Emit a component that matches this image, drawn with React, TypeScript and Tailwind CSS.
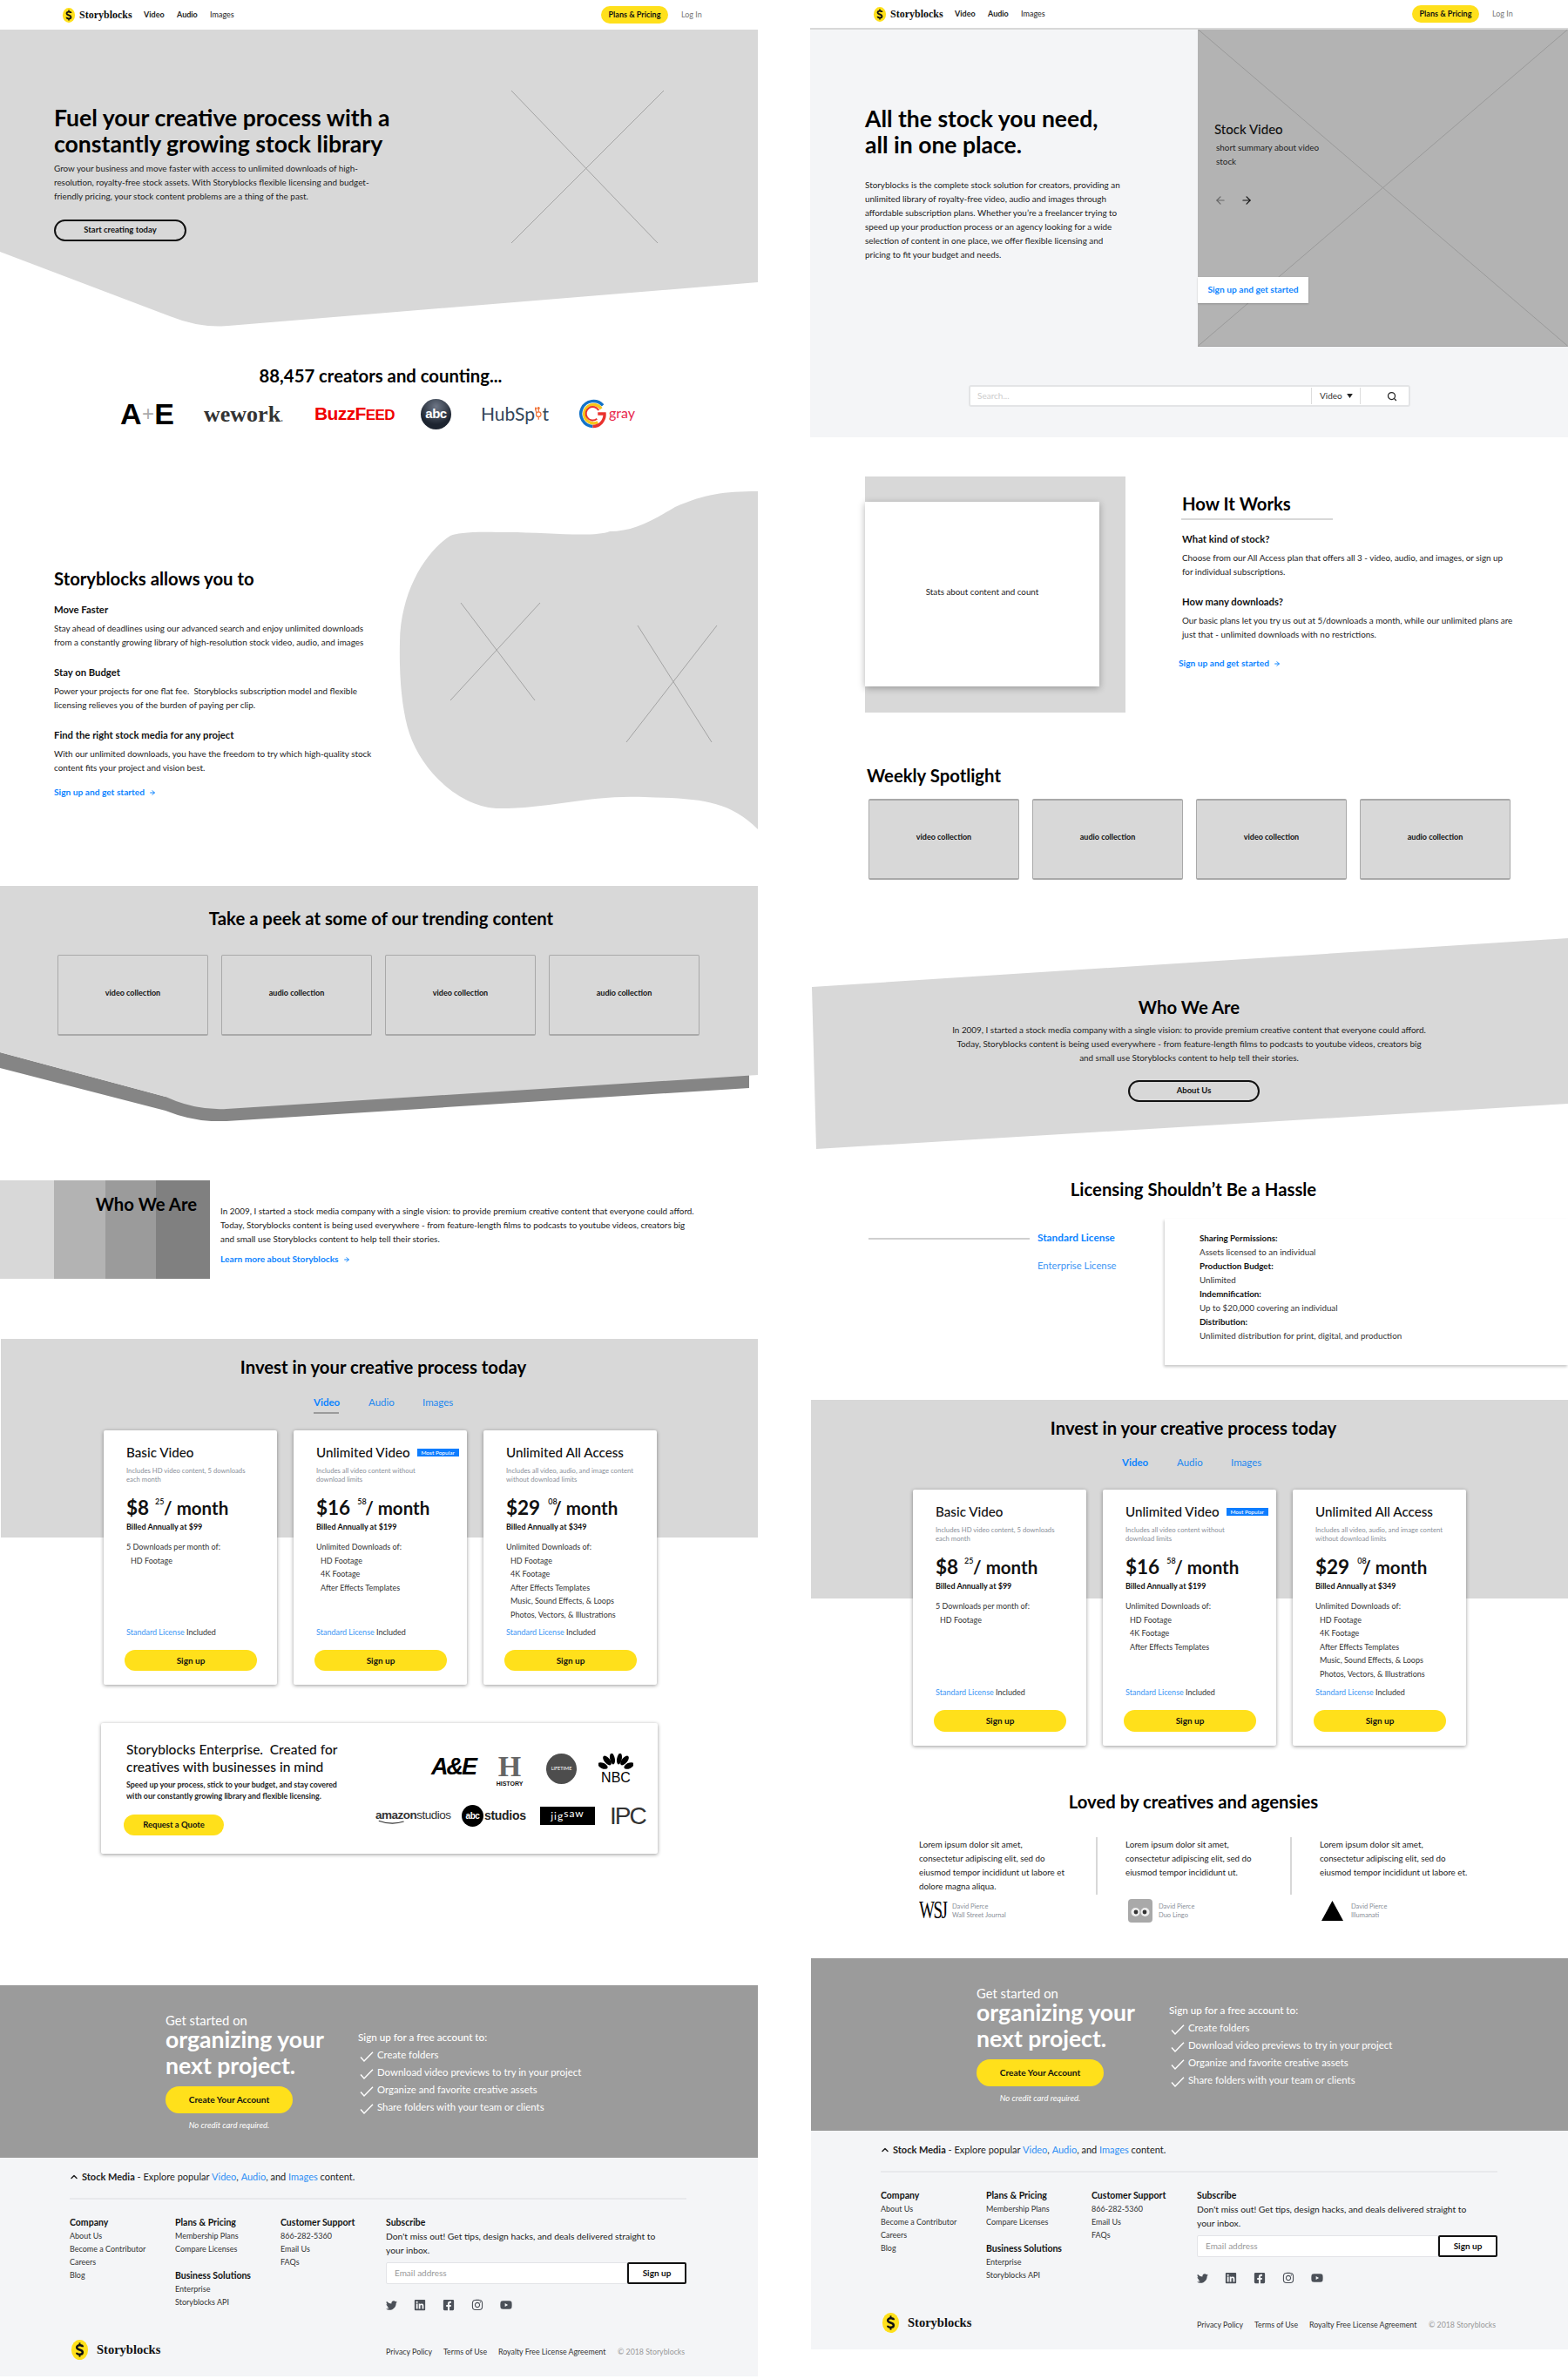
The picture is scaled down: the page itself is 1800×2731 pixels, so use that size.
import React from "react";
import { ArrowLeft, ArrowRight, ChevronUp, Search } from "lucide-react";
import { FaTwitter, FaLinkedin, FaFacebookSquare, FaInstagram, FaYoutube } from "react-icons/fa";

function SbLogo({ size }: { size: "sm" | "lg" }) {
  return (
    <svg viewBox="0 0 20 24" className={size === "sm" ? "w-[16px] h-[17px] shrink-0" : "w-[23px] h-[23px] shrink-0"}>
      <ellipse cx="10" cy="12" rx="10" ry="12" fill="#ffe01b" />
      <path d="M13.5 8.5C13.5 7 12 6.5 10 6.5S6.5 7.5 6.5 9.2c0 3.6 7 2 7 5.6 0 1.7-1.5 2.7-3.5 2.7s-3.5-.7-3.5-2.2" fill="none" stroke="#111" strokeWidth="2.6" />
      <rect x="9" y="3.5" width="2" height="3" fill="#111" />
      <rect x="9" y="17.5" width="2" height="3" fill="#111" />
    </svg>
  );
}

function Header({ right }: { right?: boolean }) {
  return (
    <div className={right ? "h-[34px] flex items-center bg-white border-b-2 border-[#d8d8d8] pl-[72px]" : "h-[34px] flex items-center bg-white pl-[71px]"}>
      <SbLogo size="sm" />
      <span className="ml-[4px] w-[74px] font-['Liberation_Serif',serif] font-bold text-[12px] text-[#111]">Storyblocks</span>
      <span className="w-[38px] text-[9px] font-bold text-[#222]">Video</span>
      <span className="w-[38px] text-[9px] font-bold text-[#222]">Audio</span>
      <span className="w-[449px] text-[9px] font-medium text-[#333]">Images</span>
      <span className="w-[77px] h-[20px] rounded-full bg-[#ffe01b] flex items-center justify-center text-[9px] font-bold text-[#111]">Plans &amp; Pricing</span>
      <span className="ml-[15px] text-[9px] text-[#777]">Log In</span>
    </div>
  );
}

function Cross({ children }: { children: React.ReactNode }) {
  return <svg className="absolute inset-0 w-full h-full" fill="none" stroke="#a3a3a3" strokeWidth="1">{children}</svg>;
}

function BlueLink({ children, arrow }: { children: React.ReactNode; arrow?: boolean }) {
  return (
    <div className="flex items-center h-[16px] text-[10.2px] font-bold text-[#0d84ff]">
      {children}
      {arrow && <ArrowRight size={8} strokeWidth={3} className="ml-[5px]" />}
    </div>
  );
}

function Para({ children, className }: { children: React.ReactNode; className?: string }) {
  return <p className={"text-[9.9px] leading-[16px] text-[#222] whitespace-nowrap " + (className ?? "")}>{children}</p>;
}

function H2({ children, className }: { children: React.ReactNode; className?: string }) {
  return <h2 className={"text-[20.3px] leading-[26px] font-bold text-black " + (className ?? "")}>{children}</h2>;
}

function Collection({ label, filled }: { label: string; filled?: boolean }) {
  return (
    <div className={filled
      ? "w-[173px] h-[93px] flex items-center justify-center pb-[5px] rounded-[2px] bg-[#d8d8d8] border border-[#a9a9a9] border-b-2 border-t-2 text-[9px] font-bold text-[#111]"
      : "w-[173px] h-[93px] flex items-center justify-center pb-[5px] rounded-[2px] border border-[#a9a9a9] border-b-2 text-[9px] font-bold text-[#111]"}>
      {label}
    </div>
  );
}

function OutlineBtn({ children, className }: { children: React.ReactNode; className?: string }) {
  return <div className={"h-[25px] rounded-full border-2 border-[#111] flex items-center justify-center text-[9.5px] font-bold text-[#111] " + (className ?? "")}>{children}</div>;
}

function YellowBtn({ children, className }: { children: React.ReactNode; className?: string }) {
  return <div className={"rounded-full bg-[#ffe01b] flex items-center justify-center font-bold text-[#111] " + (className ?? "")}>{children}</div>;
}

type Plan = { name: string; badge?: boolean; desc: string[]; dollars: string; cents: string; supClass: string; billed: string; lead: string; items: string[] };

const plans: Plan[] = [
  { name: "Basic Video", desc: ["Includes HD video content, 5 downloads", "each month"], dollars: "$8", cents: "25", supClass: "ml-[7px] w-[10px]", billed: "Billed Annually at $99", lead: "5 Downloads per month of:", items: ["HD Footage"] },
  { name: "Unlimited Video", badge: true, desc: ["Includes all video content without", "download limits"], dollars: "$16", cents: "58", supClass: "ml-[8px] w-[9px]", billed: "Billed Annually at $199", lead: "Unlimited Downloads of:", items: ["HD Footage", "4K Footage", "After Effects Templates"] },
  { name: "Unlimited All Access", desc: ["Includes all video, audio, and image content", "without download limits"], dollars: "$29", cents: "08", supClass: "ml-[9px] w-[6px]", billed: "Billed Annually at $349", lead: "Unlimited Downloads of:", items: ["HD Footage", "4K Footage", "After Effects Templates", "Music, Sound Effects, & Loops", "Photos, Vectors, & Illustrations"] },
];

function PlanCard({ plan, tall }: { plan: Plan; tall?: boolean }) {
  return (
    <div className={(tall ? "h-[294px]" : "h-[292px]") + " w-[199px] flex flex-col bg-white rounded-[2px] shadow-[0_1px_4px_rgba(0,0,0,0.4)] pl-[26px]"}>
      <div className="mt-[15px] h-[20px] flex items-center text-[15.2px] font-medium text-[#111] whitespace-nowrap">
        {plan.name}
        {plan.badge && <span className="ml-[8px] w-[48px] h-[9px] bg-[#0d7dff] text-white text-[6.5px] leading-[9px] text-center">Most Popular</span>}
      </div>
      <div className="mt-[6px] text-[7.7px] leading-[10px] text-[#8a8f99] whitespace-nowrap">
        <div>{plan.desc[0]}</div>
        <div>{plan.desc[1]}</div>
      </div>
      <div className="mt-[14px] h-[28px] flex items-center text-[22.5px] font-bold text-[#111] whitespace-nowrap">
        {plan.dollars}
        <span className={"text-[9px] font-semibold self-start leading-[14px] " + plan.supClass}>{plan.cents}</span>
        <span className="text-[20.5px]">/ month</span>
      </div>
      <div className="mt-[1px] text-[9px] leading-[14px] font-bold text-[#111]">{plan.billed}</div>
      <div className="mt-[8px] text-[9px] leading-[15.5px] text-[#333]">
        <div>{plan.lead}</div>
        {plan.items.map((it) => <div key={it} className="pl-[5px]">{it}</div>)}
      </div>
      <div className="mt-auto text-[9px] leading-[14px] text-[#333]"><span className="text-[#3d96f5]">Standard License</span> Included</div>
      <YellowBtn className={(tall ? "h-[25px] mb-[16px]" : "h-[24px] mb-[16px]") + " mt-[13px] -ml-[2px] w-[152px] text-[10px]"}>Sign up</YellowBtn>
    </div>
  );
}

function Pricing({ right }: { right?: boolean }) {
  return (
    <section className="relative">
      <div className="absolute left-px right-0 top-0 h-[228px] bg-[#d8d8d8]" />
      <div className="relative">
        <H2 className="pt-[19px] pl-[10px] text-center">Invest in your creative process today</H2>
        <div className={right ? "mt-[19px] pl-[358px] flex text-[11.5px] leading-[16px] text-[#1e88f0] h-[16px]" : "mt-[20px] pl-[360px] flex text-[11.5px] leading-[16px] text-[#1e88f0] h-[16px]"}>
          <span className="w-[63px] font-bold relative text-[#0d84ff]">
            Video
            {!right && <span className="absolute left-0 top-[19px] w-[29px] h-[2px] bg-[#9b9b9b]" />}
          </span>
          <span className="w-[62px]">Audio</span>
          <span>Images</span>
        </div>
        <div className={right ? "mt-[23px] pl-[118px] flex gap-[19px]" : "mt-[24px] pl-[119px] flex gap-[19px]"}>
          {plans.map((p) => <PlanCard key={p.name} plan={p} tall={right} />)}
        </div>
      </div>
    </section>
  );
}

function CheckItem({ children }: { children: React.ReactNode }) {
  return (
    <div className="h-[20px] flex items-center pl-[2px] text-[11.4px] text-white">
      <svg viewBox="0 0 16 12" className="w-[16px] h-[12px] mt-[3px] mr-[4px]" fill="none" stroke="#fff" strokeWidth="1.4"><path d="M1 6.5L5 11L15 .8" /></svg>
      {children}
    </div>
  );
}

function CTA() {
  return (
    <section className="h-[198px] bg-[#9b9b9b] flex pl-[190px] text-white">
      <div className="w-[221px]">
        <div className="pt-[30px] text-[14.8px] leading-[20px]">Get started on</div>
        <div className="-mt-[3px] text-[26.6px] leading-[30px] font-bold whitespace-nowrap">organizing your<br />next project.</div>
        <YellowBtn className="mt-[9px] w-[146px] h-[31px] text-[10.2px]">Create Your Account</YellowBtn>
        <div className="mt-[7px] w-[146px] text-center text-[9.5px] leading-[14px] italic">No credit card required.</div>
      </div>
      <div className="pt-[50px]">
        <div className="h-[20px] flex items-center text-[11.7px] font-medium">Sign up for a free account to:</div>
        <CheckItem>Create folders</CheckItem>
        <CheckItem>Download video previews to try in your project</CheckItem>
        <CheckItem>Organize and favorite creative assets</CheckItem>
        <CheckItem>Share folders with your team or clients</CheckItem>
      </div>
    </section>
  );
}

function FootCol({ title, items, className }: { title: string; items: string[]; className?: string }) {
  return (
    <div className={className}>
      <div className="text-[10.5px] leading-[16px] font-bold text-[#111] whitespace-nowrap">{title}</div>
      {items.map((i) => <div key={i} className="text-[9px] leading-[15px] text-[#333] whitespace-nowrap">{i}</div>)}
    </div>
  );
}

function Footer() {
  return (
    <footer className="h-[251px] bg-[#f4f5f7] pl-[80px]">
      <div className="pt-[14px] h-[30px] flex items-center text-[11px] leading-[16px] text-[#222] whitespace-pre">
        <ChevronUp size={12} strokeWidth={3} className="mr-[3px] -ml-[1px]" />
        <span className="font-bold">Stock Media</span> - Explore popular <span className="text-[#2f8ff5]">Video</span>, <span className="text-[#2f8ff5]">Audio</span>, and <span className="text-[#2f8ff5]">Images</span> content.
      </div>
      <div className="mt-[16px] w-[708px] h-[2px] bg-[#e8e9ec]" />
      <div className="mt-[18px] flex">
        <FootCol className="w-[121px]" title="Company" items={["About Us", "Become a Contributor", "Careers", "Blog"]} />
        <div className="w-[121px]">
          <FootCol title="Plans & Pricing" items={["Membership Plans", "Compare Licenses"]} />
          <FootCol className="mt-[15px]" title="Business Solutions" items={["Enterprise", "Storyblocks API"]} />
        </div>
        <FootCol className="w-[121px]" title="Customer Support" items={["866-282-5360", "Email Us", "FAQs"]} />
        <div className="w-[345px]">
          <div className="text-[10.5px] leading-[16px] font-bold text-[#111]">Subscribe</div>
          <div className="text-[10.3px] leading-[16px] text-[#222] whitespace-nowrap">Don't miss out! Get tips, design hacks, and deals delivered straight to<br />your inbox.</div>
          <div className="mt-[6px] flex">
            <div className="w-[277px] h-[25px] bg-white border border-[#e3e4e8] rounded-l-[2px] pl-[9px] flex items-center text-[10px] text-[#999]">Email address</div>
            <div className="w-[68px] h-[25px] border-2 border-[#111] rounded-[2px] bg-white flex items-center justify-center text-[10px] font-bold text-[#111]">Sign up</div>
          </div>
          <div className="mt-[17px] flex items-center gap-[19px] text-[#4b5058]">
            <FaTwitter size={13} /><FaLinkedin size={14} /><FaFacebookSquare size={14} /><FaInstagram size={14} /><FaYoutube size={14} />
          </div>
        </div>
      </div>
      <div className="mt-[33px] flex items-center h-[23px]">
        <div className="w-[363px] flex items-center">
          <SbLogo size="lg" />
          <span className="ml-[8px] font-['Liberation_Serif',serif] font-bold text-[14.5px] text-[#111]">Storyblocks</span>
        </div>
        <div className="pt-[4px] flex text-[8.8px] text-[#333] whitespace-nowrap">
          <span className="w-[66px]">Privacy Policy</span>
          <span className="w-[63px]">Terms of Use</span>
          <span className="w-[137px]">Royalty Free License Agreement</span>
          <span className="text-[#999]">© 2018 Storyblocks</span>
        </div>
      </div>
    </footer>
  );
}

function LeftPage() {
  const sections = [
    { h: "Move Faster", p: <>Stay ahead of deadlines using our advanced search and enjoy unlimited downloads<br />from a constantly growing library of high-resolution stock video, audio, and images</> },
    { h: "Stay on Budget", p: <>Power your projects for one flat fee.&nbsp; Storyblocks subscription model and flexible<br />licensing relieves you of the burden of paying per clip.</> },
    { h: "Find the right stock media for any project", p: <>With our unlimited downloads, you have the freedom to try which high-quality stock<br />content fits your project and vision best.</> },
  ];
  return (
    <div className="w-[870px] shrink-0">
      <Header />
      {/* Hero */}
      <section className="relative h-[341px]">
        <svg className="absolute inset-0 w-full h-full" viewBox="0 0 870 341" fill="#d8d8d8"><path d="M0 0H870V290L262 340Q230 343 195 329L0 255Z" /></svg>
        <Cross><path d="M587 70L755 245M762 70L587 245" /></Cross>
        <div className="relative pl-[62px] pt-[86px]">
          <h1 className="text-[26.6px] leading-[30px] font-bold text-black whitespace-nowrap">Fuel your creative process with a<br />constantly growing stock library</h1>
          <Para className="mt-[5px]">Grow your business and move faster with access to unlimited downloads of high-<br />resolution, royalty-free stock assets. With Storyblocks flexible licensing and budget-<br />friendly pricing, your stock content problems are a thing of the past.</Para>
          <OutlineBtn className="mt-[19px] w-[152px]">Start creating today</OutlineBtn>
        </div>
      </section>
      {/* Creators */}
      <H2 className="mt-[43px] pl-[4px] text-center">88,457 creators and counting...</H2>
      <div className="mt-[14px] h-[34px] pl-[138px] flex items-center gap-[34px]">
        <div className="w-[62px] flex items-center justify-between text-[34px] leading-[32px] font-['Liberation_Sans',sans-serif] font-bold text-black"><span>A</span><span className="font-normal text-[#aaa] text-[24px]">+</span><span>E</span></div>
        <div className="w-[93px] font-['Liberation_Serif',serif] font-bold text-[26px] text-[#333] whitespace-nowrap">wework<span className="text-[#888] text-[12px]">.</span></div>
        <div className="w-[88px] font-['Liberation_Sans',sans-serif] font-bold text-[21px] tracking-[-0.6px] text-[#f00000] whitespace-nowrap">BuzzF<span className="uppercase text-[17px]">eed</span></div>
        <div className="w-[35px] h-[35px] rounded-full bg-[radial-gradient(circle_at_50%_25%,#6d7686,#1d2430_65%)] flex items-center justify-center font-['Liberation_Sans',sans-serif] font-bold text-[15px] tracking-[-0.5px] text-white">abc</div>
        <div className="w-[78px] flex items-center text-[21px] text-[#33475b] whitespace-nowrap">
          HubSp
          <svg viewBox="0 0 14 26" className="w-[13px] h-[25px] -mt-[2px]" fill="none" stroke="#f0743a" strokeWidth="2"><circle cx="7" cy="15" r="4.5" /><path d="M7 10V3M3 12L1 5M7 20V25" /><circle cx="7" cy="3" r="1.5" fill="#f0743a" /><circle cx="1.5" cy="4" r="1.4" fill="#f0743a" /></svg>
          t
        </div>
        <div className="w-[66px] flex items-center -ml-px">
          <svg viewBox="0 0 34 36" className="w-[34px] h-[36px]" fill="none" strokeWidth="3.5">
            <path d="M30 8A15 15 0 1 0 18 33" stroke="#1473c8" />
            <path d="M28 12A11 11 0 1 0 24 28" stroke="#f7c51a" />
            <path d="M24 18H32A14 14 0 0 1 18 33" stroke="#e9322e" />
            <path d="M25 14A8 8 0 1 0 23 24" stroke="#e9322e" strokeWidth="2" />
          </svg>
          <span className="ml-[3px] -mt-[2px] text-[16px] text-[#e8274b]">gray</span>
        </div>
      </div>
      {/* Allows */}
      <section className="relative h-[525px]">
        <svg className="absolute left-0 top-0 w-full h-full" viewBox="0 0 870 525" fill="#d8d8d8">
          <path d="M870 72C830 72 810 75 775 90C745 108 725 118 700 118C680 126 620 118 574 119C540 118 525 120 517 123C490 140 460 185 459 245C458 290 462 325 470 350C485 395 530 436 574 436C630 436 680 420 740 423C800 425 835 425 870 460Z" />
        </svg>
        <Cross><path d="M529 200L614 312M620 200L517 312M732 226L817 360M823 226L719 360" /></Cross>
        <div className="relative pl-[62px] pt-[159px] w-[442px]">
          <H2>Storyblocks allows you to</H2>
          <div className="mt-[15px]">
            {sections.map((s) => (
              <div key={s.h} className="mb-[19px]">
                <div className="text-[11.3px] leading-[16px] font-bold text-[#111]">{s.h}</div>
                <Para className="mt-[5px]">{s.p}</Para>
              </div>
            ))}
          </div>
          <div className="-mt-[6px]"><BlueLink arrow>Sign up and get started</BlueLink></div>
        </div>
      </section>
      {/* Trending */}
      <section className="relative h-[270px]">
        <svg className="absolute inset-0 w-full h-full" viewBox="0 0 870 270">
          <path fill="#858585" d="M0 191L190 242L860 210V232L260 270Q225 272 190 258L0 209Z" />
          <path fill="#d8d8d8" d="M0 0H870V217L260 256Q225 258 190 242L0 191Z" />
        </svg>
        <div className="relative pt-[24px]">
          <H2 className="pl-[5px] text-center">Take a peek at some of our trending content</H2>
          <div className="mt-[29px] pl-[66px] flex gap-[15px]">
            <Collection label="video collection" />
            <Collection label="audio collection" />
            <Collection label="video collection" />
            <Collection label="audio collection" />
          </div>
        </div>
      </section>
      {/* Who we are */}
      <section className="mt-[68px] h-[113px] flex">
        <div className="relative w-[241px] h-full flex">
          <div className="w-[62px] bg-[#d8d8d8]" />
          <div className="w-[59px] bg-[#b3b3b3]" />
          <div className="w-[58px] bg-[#9b9b9b]" />
          <div className="w-[62px] bg-[#808080]" />
          <H2 className="absolute right-[15px] top-[14px] whitespace-nowrap">Who We Are</H2>
        </div>
        <div className="ml-[12px] pt-[27px]">
          <Para>In 2009, I started a stock media company with a single vision: to provide premium creative content that everyone could afford.<br />Today, Storyblocks content is being used everywhere - from feature-length films to podcasts to youtube videos, creators big<br />and small use Storyblocks content to help tell their stories.</Para>
          <div className="mt-[8px]"><BlueLink arrow>Learn more about Storyblocks</BlueLink></div>
        </div>
      </section>
      <div className="h-[69px]" />
      <Pricing />
      {/* Enterprise */}
      <div className="mt-[44px] ml-[116px] w-[639px] h-[150px] flex bg-white rounded-[2px] shadow-[0_1px_4px_rgba(0,0,0,0.4)]">
        <div className="w-[315px] pl-[29px] pt-[20px]">
          <div className="text-[15.5px] leading-[20px] font-medium text-[#111] whitespace-pre">Storyblocks Enterprise.  Created for{"\n"}creatives with businesses in mind</div>
          <div className="mt-[4px] text-[8.9px] leading-[13px] font-bold text-[#222] whitespace-nowrap">Speed up your process, stick to your budget, and stay covered<br />with our constantly growing library and flexible licensing.</div>
          <YellowBtn className="mt-[15px] -ml-[3px] w-[115px] h-[24px] text-[9.5px]">Request a Quote</YellowBtn>
        </div>
        <div className="pt-[35px]">
          <div className="flex pl-[64px] h-[39px] items-start">
            <div className="w-[46px] font-['Liberation_Sans',sans-serif] font-bold italic text-[27px] leading-[30px] tracking-[-2px] text-black">A&amp;E</div>
            <div className="ml-[28px] w-[32px] flex flex-col items-center">
              <span className="font-['Liberation_Serif',serif] font-bold text-[34px] leading-[30px] text-[#666]">H</span>
              <span className="font-['Liberation_Sans',sans-serif] font-bold text-[7px] leading-[9px] text-[#111]">HISTORY</span>
            </div>
            <div className="ml-[26px] w-[35px] h-[35px] rounded-full bg-[#4d4d4d] flex items-center justify-center text-[5.5px] text-white">LIFETIME</div>
            <div className="ml-[25px] w-[40px] flex flex-col items-center">
              <svg viewBox="0 0 40 20" className="w-[40px] h-[20px]" fill="#000">
                <ellipse cx="5" cy="14" rx="6" ry="3.2" transform="rotate(25 5 14)" />
                <ellipse cx="10" cy="8" rx="6.5" ry="3.2" transform="rotate(50 10 8)" />
                <ellipse cx="16" cy="6" rx="6.5" ry="2.8" transform="rotate(80 16 6)" />
                <ellipse cx="24" cy="6" rx="6.5" ry="2.8" transform="rotate(100 24 6)" />
                <ellipse cx="30" cy="8" rx="6.5" ry="3.2" transform="rotate(130 30 8)" />
                <ellipse cx="35" cy="14" rx="6" ry="3.2" transform="rotate(155 35 14)" />
              </svg>
              <span className="font-['Liberation_Sans',sans-serif] text-[16px] leading-[15px] text-black">NBC</span>
            </div>
          </div>
          <div className="mt-[20px] flex items-center h-[25px]">
            <div className="relative w-[83px] font-['Liberation_Sans',sans-serif] text-[13.5px] tracking-[-0.5px] text-[#333] whitespace-nowrap">
              <span className="font-bold">amazon</span>studios
              <svg viewBox="0 0 40 6" className="absolute left-[2px] top-[15px] w-[36px] h-[6px]" fill="none" stroke="#333" strokeWidth="1.2"><path d="M2 1Q18 7 34 2" /></svg>
            </div>
            <div className="ml-[16px] w-[74px] flex items-center">
              <div className="w-[25px] h-[25px] rounded-full bg-black flex items-center justify-center font-['Liberation_Sans',sans-serif] font-bold text-[10px] tracking-[-0.4px] text-white">abc</div>
              <span className="ml-[1px] font-['Liberation_Sans',sans-serif] font-bold text-[14px] tracking-[-0.3px] text-[#222]">studios</span>
            </div>
            <div className="ml-[16px] w-[63px] h-[21px] bg-black flex items-center justify-center text-white text-[12px] tracking-[1px]"><span>jig</span><span className="-mt-[6px]">saw</span></div>
            <div className="ml-[17px] font-['Liberation_Sans',sans-serif] text-[28px] leading-[25px] tracking-[-2px] text-[#333]">IPC</div>
          </div>
        </div>
      </div>
      <div className="h-[151px]" />
      <CTA />
      <Footer />
    </div>
  );
}

function Quote({ lines, wsj, duo, who, org, className, textClass }: { lines: React.ReactNode; wsj?: boolean; duo?: boolean; who: string; org: string; className: string; textClass: string }) {
  return (
    <div className={className}>
      <div className={"h-[66px] text-[9.8px] leading-[16px] text-[#222] whitespace-nowrap " + textClass}>{lines}</div>
      <div className="mt-[5px] h-[27px] flex items-center">
        {wsj && <span className="w-[38px] font-['Liberation_Serif',serif] text-[19px] tracking-[-1.5px] scale-y-150 origin-center text-black">WSJ</span>}
        {duo && (
          <svg viewBox="0 0 28 27" className="ml-[3px] mr-[7px] w-[28px] h-[27px]">
            <rect width="28" height="27" rx="4" fill="#a9a9a9" />
            <circle cx="8.5" cy="15" r="5" fill="#eee" /><circle cx="19.5" cy="15" r="5" fill="#eee" />
            <circle cx="9" cy="15" r="2.4" fill="#333" /><circle cx="19" cy="15" r="2.4" fill="#333" />
          </svg>
        )}
        {!wsj && !duo && (
          <svg viewBox="0 0 25 23" className="ml-[2px] mr-[9px] w-[25px] h-[23px]"><path d="M12.5 0L25 23H0Z" fill="#000" /></svg>
        )}
        <div className="text-[7.5px] leading-[10px] text-[#8a8f99] whitespace-nowrap"><div>{who}</div><div>{org}</div></div>
      </div>
    </div>
  );
}

function RightPage() {
  return (
    <div className="w-[870px] shrink-0">
      <Header right />
      {/* Hero */}
      <section className="h-[468px] bg-[#f4f5f7]">
        <div className="h-[364px] flex">
          <div className="w-[445px] pl-[63px] pt-[87px]">
            <h1 className="text-[26.5px] leading-[30px] font-bold text-black">All the stock you need,<br />all in one place.</h1>
            <Para className="mt-[23px] leading-[16.1px]">Storyblocks is the complete stock solution for creators, providing an<br />unlimited library of royalty-free video, audio and images through<br />affordable subscription plans. Whether you’re a freelancer trying to<br />speed up your production process or an agency looking for a wide<br />selection of content in one place, we offer flexible licensing and<br />pricing to fit your budget and needs.</Para>
          </div>
          <div className="relative w-[425px] bg-[#b3b3b3] border-b border-[#a3a3a3]">
            <svg viewBox="0 0 425 364" className="absolute inset-0 w-full h-full" fill="none" stroke="#9a9a9a"><path d="M0 0L425 364M425 0L0 364" /></svg>
            <div className="relative pt-[104px]">
              <div className="pl-[19px] h-[20px] flex items-center text-[15px] font-medium text-[#111]">Stock Video</div>
              <Para className="mt-[3px] ml-[21px]">short summary about video<br />stock</Para>
              <div className="mt-[30px] ml-[19px] flex gap-[16px]">
                <ArrowLeft size={14} className="text-[#666]" />
                <ArrowRight size={14} className="text-[#111]" />
              </div>
              <div className="mt-[81px] w-[127px] h-[30px] bg-white shadow-[0_1px_2px_rgba(0,0,0,0.2)] flex items-center justify-center text-[10.2px] font-bold text-[#0d84ff]">Sign up and get started</div>
            </div>
          </div>
        </div>
        <div className="mt-[44px] ml-[182px] w-[507px] h-[25px] bg-white border-2 border-[#e3e4e6] rounded-[3px] flex items-center">
          <span className="pl-[8px] w-[391px] text-[10px] text-[#ccc]">Search...</span>
          <span className="h-[19px] w-px bg-[#ddd]" />
          <span className="w-[55px] pl-[9px] flex items-center text-[10px] text-[#333]">Video<svg viewBox="0 0 8 6" className="ml-[5px] w-[7px] h-[5px]"><path d="M0 0H8L4 6Z" fill="#222" /></svg></span>
          <span className="h-[19px] w-px bg-[#ddd]" />
          <Search size={12} strokeWidth={2.5} className="ml-[30px] text-[#222]" />
        </div>
      </section>
      {/* How it works */}
      <section className="mt-[45px] flex pl-[63px]">
        <div className="relative w-[299px] h-[271px] bg-[#d8d8d8]">
          <div className="absolute left-0 top-[29px] w-[269px] h-[212px] bg-white shadow-[0_2px_8px_rgba(0,0,0,0.3)] flex items-center justify-center text-[9.8px] text-[#222] pb-[6px]">Stats about content and count</div>
        </div>
        <div className="ml-[65px] w-[385px] pt-[18px]">
          <H2>How It Works</H2>
          <div className="mt-[4px] -ml-px w-[174px] h-[2px] bg-[#d8d8d8]" />
          <div className="mt-[14px] text-[11.3px] leading-[16px] font-bold text-[#111]">What kind of stock?</div>
          <Para className="mt-[5px]">Choose from our All Access plan that offers all 3 - video, audio, and images, or sign up<br />for individual subscriptions.</Para>
          <div className="mt-[19px] text-[11.3px] leading-[16px] font-bold text-[#111]">How many downloads?</div>
          <Para className="mt-[5px]">Our basic plans let you try us out at 5/downloads a month, while our unlimited plans are<br />just that - unlimited downloads with no restrictions.</Para>
          <div className="mt-[18px] -ml-[4px]"><BlueLink arrow>Sign up and get started</BlueLink></div>
        </div>
      </section>
      {/* Weekly */}
      <H2 className="mt-[59px] pl-[65px]">Weekly Spotlight</H2>
      <div className="mt-[14px] pl-[67px] flex gap-[15px]">
        <Collection filled label="video collection" />
        <Collection filled label="audio collection" />
        <Collection filled label="video collection" />
        <Collection filled label="audio collection" />
      </div>
      {/* Who we are */}
      <section className="relative mt-[67px] h-[242px]">
        <svg className="absolute inset-0 w-full h-full" viewBox="0 0 870 242" fill="#d8d8d8"><path d="M2 56L870 0V190L7 242Z" /></svg>
        <div className="relative pt-[66px] text-center">
          <H2>Who We Are</H2>
          <Para className="mt-[5px]">In 2009, I started a stock media company with a single vision: to provide premium creative content that everyone could afford.<br />Today, Storyblocks content is being used everywhere - from feature-length films to podcasts to youtube videos, creators big<br />and small use Storyblocks content to help tell their stories.</Para>
          <OutlineBtn className="mt-[18px] ml-[365px] w-[151px]">About Us</OutlineBtn>
        </div>
      </section>
      {/* Licensing */}
      <H2 className="mt-[33px] pl-[10px] text-center">Licensing Shouldn’t Be a Hassle</H2>
      <section className="mt-[21px] flex h-[168px]">
        <div className="w-[407px] pl-[67px] pt-[14px]">
          <div className="h-[16px] flex items-center text-[11.8px] font-bold text-[#0d84ff] whitespace-nowrap">
            <span className="mr-[9px] mt-[2px] w-[185px] h-[2px] bg-[#cfcfcf]" />Standard License
          </div>
          <div className="mt-[16px] pl-[194px] text-[11.3px] leading-[16px] text-[#3d96f5]">Enterprise License</div>
        </div>
        <div className="w-[463px] pl-[40px] pt-[14px] text-[9.8px] leading-[16px] text-[#333] shadow-[-1px_2px_3px_rgba(0,0,0,0.22)] bg-white">
          <div className="font-bold text-[#111]">Sharing Permissions:</div>
          <div>Assets licensed to an individual</div>
          <div className="font-bold text-[#111]">Production Budget:</div>
          <div>Unlimited</div>
          <div className="font-bold text-[#111]">Indemnification:</div>
          <div>Up to $20,000 covering an individual</div>
          <div className="font-bold text-[#111]">Distribution:</div>
          <div>Unlimited distribution for print, digital, and production</div>
        </div>
      </section>
      <div className="h-[40px]" />
      <Pricing right />
      {/* Loved */}
      <H2 className="mt-[51px] pl-[10px] text-center">Loved by creatives and agensies</H2>
      <div className="mt-[28px] pl-[125px] flex">
        <Quote className="w-[205px]" textClass="border-r-2 border-[#d8d8d8]" wsj who="David Pierce" org="Wall Street Journal" lines={<>Lorem ipsum dolor sit amet,<br />consectetur adipiscing elit, sed do<br />eiusmod tempor incididunt ut labore et<br />dolore magna aliqua.</>} />
        <Quote className="ml-[32px] w-[191px]" textClass="border-r-2 border-[#d8d8d8]" duo who="David Pierce" org="Duo Lingo" lines={<>Lorem ipsum dolor sit amet,<br />consectetur adipiscing elit, sed do<br />eiusmod tempor incididunt ut.</>} />
        <Quote className="ml-[32px] w-[190px]" textClass="" who="David Pierce" org="Illumanati" lines={<>Lorem ipsum dolor sit amet,<br />consectetur adipiscing elit, sed do<br />eiusmod tempor incididunt ut labore et.</>} />
      </div>
      <div className="mt-[41px] ml-px">
        <CTA />
        <Footer />
      </div>
    </div>
  );
}

export default function App() {
  return (
    <div className="w-[1800px] h-[2731px] bg-white flex gap-[60px] overflow-hidden font-[Lato,sans-serif]">
      <LeftPage />
      <RightPage />
    </div>
  );
}
